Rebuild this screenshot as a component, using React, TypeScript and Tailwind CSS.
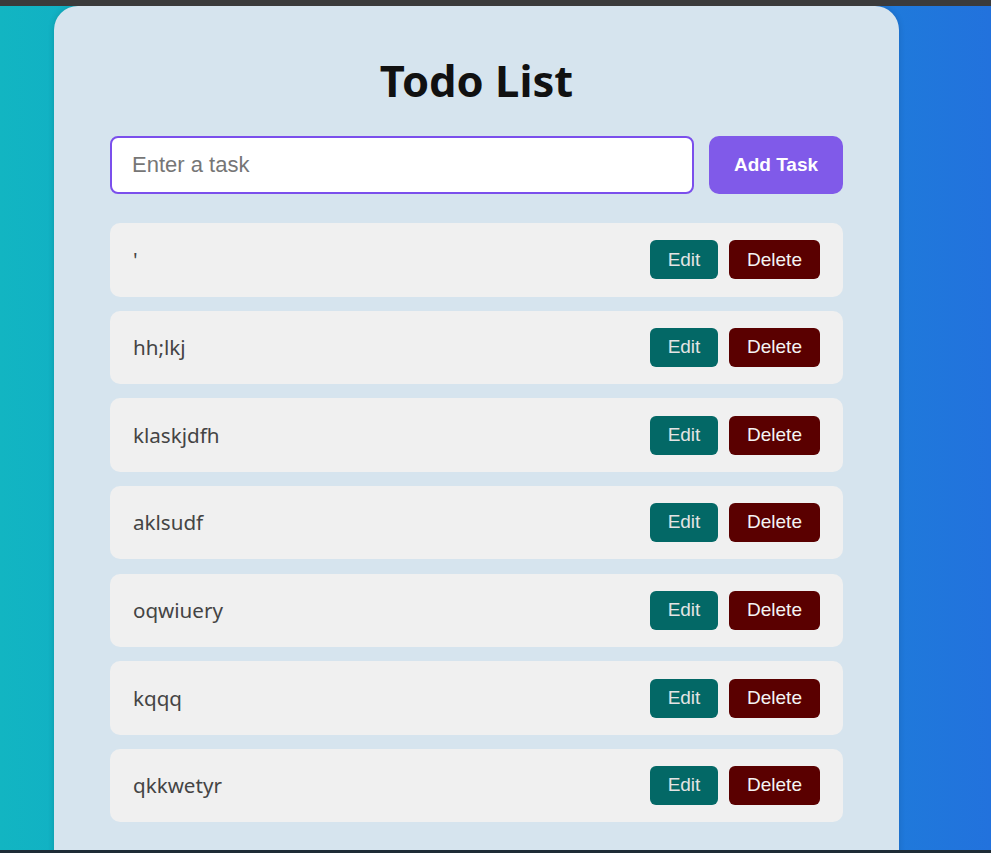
import React from "react";

const tasks = ["'", "hh;lkj", "klaskjdfh", "aklsudf", "oqwiuery", "kqqq", "qkkwetyr"];

export default function App() {
  return (
    <div className="h-[853px] w-full overflow-hidden flex flex-col bg-[#3b3b3b]">
      <div className="h-[6px] shrink-0 bg-[#3b3b3b]" />
      <div className="flex-1 min-h-0 bg-gradient-to-r from-[#12b5c2] to-[#2272dd] overflow-hidden">
        <div className="ml-[54px] w-[845px] h-[900px] bg-[#d6e4ee] rounded-t-[24px] shadow-[0_0_6px_rgba(0,0,0,0.15)] px-[56px] pt-[50px]">
          <h1 className="text-center text-[43.5px] leading-[48px] font-bold text-[#111] font-['Noto_Sans',sans-serif]">Todo List</h1>
          <div className="flex gap-[15px] mt-[32px]">
            <input
              className="flex-1 h-[58px] rounded-[8px] border-2 border-[#7b4fec] bg-white px-[20px] text-[22px] font-['Liberation_Sans',Arial,sans-serif] text-[#333] placeholder:text-[#767676] outline-none"
              placeholder="Enter a task"
            />
            <button className="w-[134px] h-[58px] rounded-[10px] bg-[#805ae9] text-white font-bold text-[19px] font-['Liberation_Sans',Arial,sans-serif]">
              Add Task
            </button>
          </div>
          <div className="mt-[29px] flex flex-col gap-[14.17px]">
            {tasks.map((t, i) => (
              <div key={i} className="h-[73.5px] rounded-[10px] bg-[#f0f0f0] flex items-center justify-between pl-[23px] pr-[23px]">
                <span className="text-[20.6px] text-[#444] font-['Noto_Sans',sans-serif]">{t}</span>
                <div className="flex gap-[11px]">
                  <button className="w-[68px] h-[39px] rounded-[6px] bg-[#036866] text-[#e4e4e4] text-[19px] font-['Liberation_Sans',Arial,sans-serif]">Edit</button>
                  <button className="w-[91px] h-[39px] rounded-[6px] bg-[#5a0000] text-[#f4f4f4] text-[19px] font-['Liberation_Sans',Arial,sans-serif]">Delete</button>
                </div>
              </div>
            ))}
          </div>
        </div>
      </div>
      <div className="h-[3px] shrink-0 bg-[#1e2c36]" />
    </div>
  );
}
